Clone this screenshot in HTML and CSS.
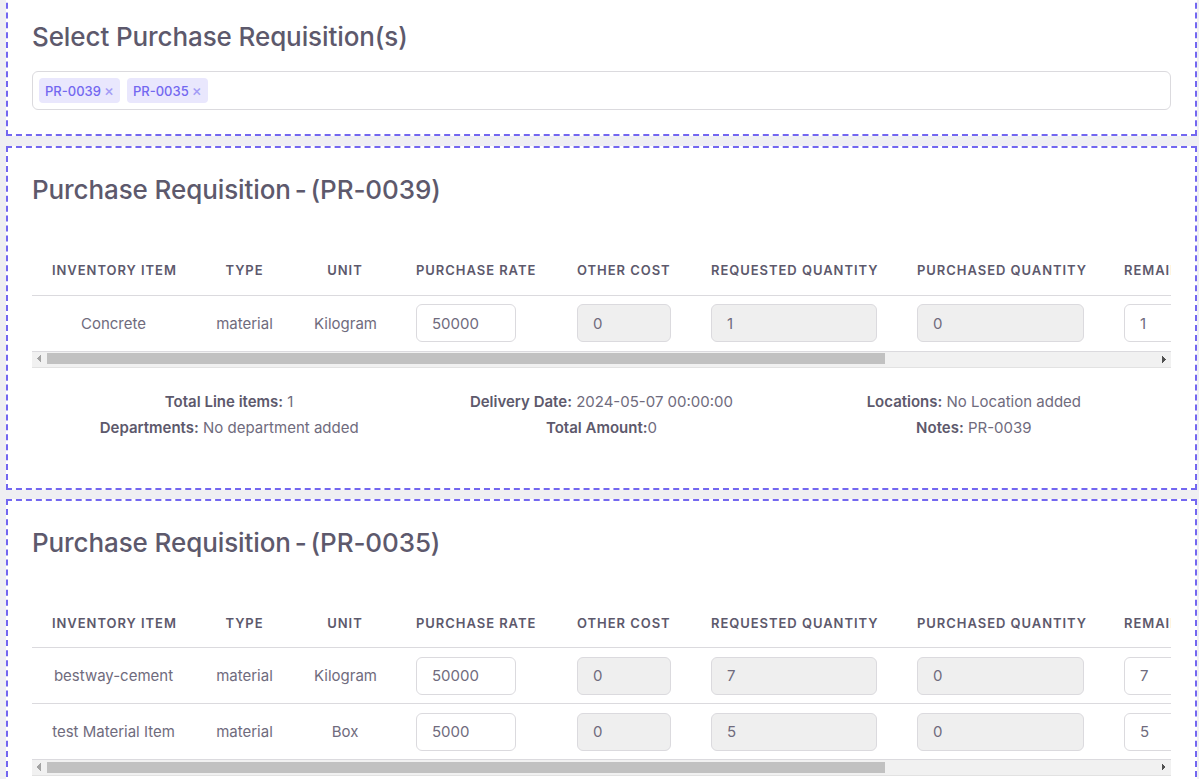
FILE: index.html
```html
<!DOCTYPE html>
<html lang="en">
<head>
<meta charset="utf-8">
<title>Purchase Requisitions</title>
<link rel="stylesheet" href="styles.css">
</head>
<body>
<div class="page">
  <section class="card card-first">
    <h4 class="card-title">Select Purchase Requisition(s)</h4>
    <div class="select-box">
      <span class="tag">PR-0039 <span class="tag-x">×</span></span>
      <span class="tag">PR-0035 <span class="tag-x">×</span></span>
    </div>
  </section>

  <section class="card">
    <h4 class="card-title pr-title">Purchase Requisition<span class="sep"> - </span>(PR-0039)</h4>
    <div class="table-wrap">
      <table class="pr-table">
        <colgroup>
          <col class="c1"><col class="c2"><col class="c3"><col class="c4"><col class="c5"><col class="c6"><col class="c7"><col class="c8"><col class="c9">
        </colgroup>
        <thead>
          <tr>
            <th class="center">Inventory Item</th>
            <th class="center">Type</th>
            <th class="center">Unit</th>
            <th>Purchase Rate</th>
            <th>Other Cost</th>
            <th>Requested Quantity</th>
            <th>Purchased Quantity</th>
            <th>Remaining Quantity</th>
            <th>Total Amount</th>
          </tr>
        </thead>
        <tbody>
          <tr>
            <td class="center">Concrete</td>
            <td class="center">material</td>
            <td class="center">Kilogram</td>
            <td><input class="inp w-rate" value="50000"></td>
            <td><input class="inp w-other ro" value="0" readonly></td>
            <td><input class="inp w-full ro" value="1" readonly></td>
            <td><input class="inp w-full ro" value="0" readonly></td>
            <td><input class="inp w-full" value="1"></td>
            <td><input class="inp w-full ro" value="50000" readonly></td>
          </tr>
        </tbody>
      </table>
    </div>
    <div class="hscroll" aria-hidden="true">
      <span class="sb-btn sb-left"></span>
      <span class="sb-track"><span class="sb-thumb"></span></span>
      <span class="sb-btn sb-right"></span>
    </div>
    <div class="info">
      <div class="info-col">
        <p><b>Total Line items:</b> 1</p>
        <p><b>Departments:</b> No department added</p>
      </div>
      <div class="info-col">
        <p><b>Delivery Date:</b> 2024-05-07 00:00:00</p>
        <p><b>Total Amount:</b>0</p>
      </div>
      <div class="info-col">
        <p><b>Locations:</b> No Location added</p>
        <p><b>Notes:</b> PR-0039</p>
      </div>
    </div>
  </section>

  <section class="card">
    <h4 class="card-title pr-title">Purchase Requisition<span class="sep"> - </span>(PR-0035)</h4>
    <div class="table-wrap">
      <table class="pr-table">
        <colgroup>
          <col class="c1"><col class="c2"><col class="c3"><col class="c4"><col class="c5"><col class="c6"><col class="c7"><col class="c8"><col class="c9">
        </colgroup>
        <thead>
          <tr>
            <th class="center">Inventory Item</th>
            <th class="center">Type</th>
            <th class="center">Unit</th>
            <th>Purchase Rate</th>
            <th>Other Cost</th>
            <th>Requested Quantity</th>
            <th>Purchased Quantity</th>
            <th>Remaining Quantity</th>
            <th>Total Amount</th>
          </tr>
        </thead>
        <tbody>
          <tr>
            <td class="center">bestway-cement</td>
            <td class="center">material</td>
            <td class="center">Kilogram</td>
            <td><input class="inp w-rate" value="50000"></td>
            <td><input class="inp w-other ro" value="0" readonly></td>
            <td><input class="inp w-full ro" value="7" readonly></td>
            <td><input class="inp w-full ro" value="0" readonly></td>
            <td><input class="inp w-full" value="7"></td>
            <td><input class="inp w-full ro" value="350000" readonly></td>
          </tr>
          <tr>
            <td class="center">test Material Item</td>
            <td class="center">material</td>
            <td class="center">Box</td>
            <td><input class="inp w-rate" value="5000"></td>
            <td><input class="inp w-other ro" value="0" readonly></td>
            <td><input class="inp w-full ro" value="5" readonly></td>
            <td><input class="inp w-full ro" value="0" readonly></td>
            <td><input class="inp w-full" value="5"></td>
            <td><input class="inp w-full ro" value="25000" readonly></td>
          </tr>
        </tbody>
      </table>
    </div>
    <div class="hscroll" aria-hidden="true">
      <span class="sb-btn sb-left"></span>
      <span class="sb-track"><span class="sb-thumb"></span></span>
      <span class="sb-btn sb-right"></span>
    </div>
    <div class="info">
      <div class="info-col">
        <p><b>Total Line items:</b> 2</p>
        <p><b>Departments:</b> No department added</p>
      </div>
      <div class="info-col">
        <p><b>Delivery Date:</b> 2024-05-07 00:00:00</p>
        <p><b>Total Amount:</b>0</p>
      </div>
      <div class="info-col">
        <p><b>Locations:</b> No Location added</p>
        <p><b>Notes:</b> PR-0035</p>
      </div>
    </div>
  </section>
</div>
</body>
</html>
```

FILE: styles.css
```css
* { box-sizing: border-box; }

html, body {
  margin: 0;
  padding: 0;
  background: #efeff2;
  font-family: Inter, "Noto Sans", "Liberation Sans", sans-serif;
  color: #6f6b7d;
}

.page {
  padding: 0 2px 0 6px;
  overflow: hidden;
}

.card {
  background: #fff;
  border: 2px dashed #7367f0;
  padding: 24px 24px;
  margin-bottom: 9px;
}

.card-first {
  margin-top: -7px;
  margin-bottom: 10px;
}

.card-title {
  margin: 0 0 16px;
  font-size: 26px;
  line-height: 36px;
  font-weight: 500;
  color: #5d596c;
  letter-spacing: -0.1px;
}

.card-title .sep {
  word-spacing: -3px;
}

.pr-title {
  margin-bottom: 38px;
}

.select-box {
  height: 39px;
  border: 1px solid #dbdade;
  border-radius: 6px;
  padding: 0 6px;
  display: flex;
  align-items: center;
  gap: 7px;
}

.tag {
  display: inline-flex;
  align-items: center;
  height: 25px;
  padding: 0 6px;
  border-radius: 4px;
  background: #e9e7fd;
  color: #7367f0;
  font-size: 13px;
  font-weight: 500;
  gap: 3px;
}

.tag-x {
  color: #a49df6;
  font-size: 15px;
}

.table-wrap {
  width: 100%;
  overflow: hidden;
}

.pr-table {
  border-collapse: collapse;
  table-layout: fixed;
  width: 1508px;
}

.c1 { width: 163px; }
.c2 { width: 99px; }
.c3 { width: 102px; }
.c4 { width: 161px; }
.c5 { width: 134px; }
.c6 { width: 206px; }
.c7 { width: 207px; }
.c8 { width: 215px; }
.c9 { width: 221px; }

.pr-table th {
  height: 49px;
  padding: 0 20px;
  text-align: left;
  font-size: 13px;
  font-weight: 600;
  letter-spacing: 0.95px;
  text-transform: uppercase;
  color: #5d596c;
  white-space: nowrap;
  border-bottom: 1px solid #dbdade;
}

.pr-table td {
  height: 56px;
  padding: 0 20px;
  font-size: 15px;
  color: #6f6b7d;
  white-space: nowrap;
  border-bottom: 1px solid #dbdade;
}

.pr-table .center { text-align: center; }

.inp {
  display: block;
  height: 38px;
  padding: 0 15px;
  border: 1px solid #dbdade;
  border-radius: 6px;
  background: #fff;
  font-family: inherit;
  font-size: 15px;
  color: #6f6b7d;
  outline: none;
}

.inp.ro { background: #efefef; }
.w-rate { width: 100px; }
.w-other { width: 94px; }
.w-full { width: 100%; }

/* horizontal scrollbar of the table */
.hscroll {
  display: flex;
  height: 16px;
  background: #f1f1f1;
  border-bottom: 1px solid #e2e2e2;
}

.sb-btn {
  width: 15px;
  flex: none;
  background-repeat: no-repeat;
  background-size: 4px 4px, 4px 4px;
}

.sb-left {
  background-image:
    linear-gradient(to bottom right, transparent 50%, #a3a3a3 50%),
    linear-gradient(to top right, transparent 50%, #a3a3a3 50%);
  background-position: 5px 3px, 5px 7px;
}

.sb-right {
  background-image:
    linear-gradient(to bottom left, transparent 50%, #505050 50%),
    linear-gradient(to top left, transparent 50%, #505050 50%);
  background-position: 6px 3px, 6px 7px;
}

.sb-track {
  flex: 1;
  display: flex;
  align-items: center;
}

.sb-thumb {
  width: 838px;
  height: 11px;
  margin-top: -1px;
  background: #c1c1c1;
}

.info {
  display: grid;
  grid-template-columns: 1fr 1fr 1fr;
  padding: 0 11px;
  margin: 21px 0 23px;
}

.info-col { text-align: center; }

.info p {
  margin: 0;
  font-size: 15px;
  line-height: 26px;
  color: #6f6b7d;
}

.info b {
  font-weight: 600;
  color: #5d596c;
}
```
